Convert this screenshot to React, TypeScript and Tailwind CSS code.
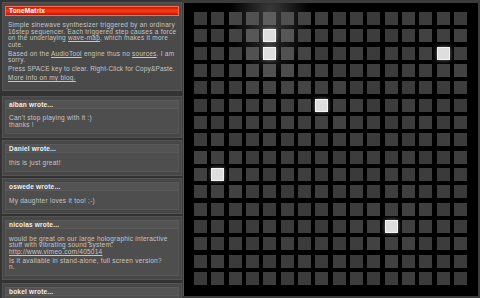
import React from "react";

type Comment = {
  id: string;
  author: string;
  lines: React.ReactNode[];
};

const ACTIVE: [number, number][] = [
  [4, 1],
  [4, 2],
  [14, 2],
  [7, 5],
  [1, 9],
  [11, 12],
];

const COMMENTS: Comment[] = [
  { id: "c1", author: "alban", lines: [<>Can't stop playing with it :)<br />thanks !</>] },
  { id: "c2", author: "Daniel", lines: ["this is just great!"] },
  { id: "c3", author: "oswede", lines: ["My daughter loves it too! ;-)"] },
  {
    id: "c4",
    author: "nicolas",
    lines: [
      <>
        would be great on our large holographic interactive stuff with vibrating sound system:
        <br />
        <span className="underline">http://www.vimeo.com/405014</span>
      </>,
      <>
        Is it available in stand-alone, full screen version?
        <br />
        n.
      </>,
    ],
  },
  { id: "c5", author: "bokel", lines: ["Wow, this is great."] },
];

// wave glow around the top-left active pair, small falloff elsewhere
function cellShade(col: number, row: number) {
  let v = 60 + ((col * 7 + row * 13) % 5) - 2;
  const dx = col - 4;
  v += 26 * Math.exp(-(dx * dx) / 2.4) * Math.exp(-(row * row) / 14);
  for (const [c, r] of ACTIVE) {
    const d = (c - col) ** 2 + (r - row) ** 2;
    v += 7 * Math.exp(-d / 3);
  }
  const n = Math.min(110, Math.round(v));
  return `rgb(${n},${n},${n})`;
}

function Cell({ col, row }: { col: number; row: number }) {
  const on = ACTIVE.some(([c, r]) => c === col && r === row);
  if (on) {
    return <div className="h-[13px] w-[13px] border border-[#f4f4f4] bg-[#dedede] shadow-[0_0_4px_rgba(255,255,255,0.45)]" />;
  }
  return <div className="h-[13px] w-[13px]" style={{ backgroundColor: cellShade(col, row) }} />;
}

function CommentBox({ c }: { c: Comment }) {
  return (
    <div className="border border-[#535353] bg-[#474747] px-[2px] pb-[3px] pt-[3px]">
      <div className="flex h-[9px] items-center border border-[#5a5a5a] bg-[#535353] px-[3px] text-[6.5px] font-bold tracking-[0.2px] text-[#f0f0f0]">
        {c.author} wrote...
      </div>
      <div className="flex flex-col gap-[2.5px] border border-t-0 border-[#575757] bg-[#4e4e4e] pb-[4.5px] pl-[3px] pr-0 pt-[6.5px] text-[6.5px] leading-[6.5px] tracking-[0.25px] text-[#c6c6c6]">
        {c.lines.map((l, i) => (
          <p key={i}>{l}</p>
        ))}
      </div>
    </div>
  );
}

export default function App() {
  const cells = [];
  for (let r = 0; r < 16; r++) {
    for (let c = 0; c < 16; c++) {
      cells.push(<Cell key={`${r}-${c}`} col={c} row={r} />);
    }
  }

  return (
    <div
      className="flex h-[298px] w-[480px] overflow-hidden bg-[#3b3b3b]"
      style={{ fontFamily: '"Liberation Sans", Arial, sans-serif' }}
    >
      <div className="flex w-[182px] shrink-0 flex-col gap-[2.5px] bg-[#333] pl-[2px] pt-[2px]">
        <div className="mb-[2.5px] border border-[#555] bg-[#4a4a4a] px-[2px] pb-[8px] pt-[3px]">
          <div className="flex h-[10px] items-center border border-[#ff6a4a] bg-linear-to-b from-[#c81c08] via-[#ff3a16] to-[#b81806] px-[3px] text-[6.5px] font-bold tracking-[0.2px] text-white">
            ToneMatrix
          </div>
          <div className="flex flex-col gap-[2.5px] pl-[3px] pr-0 pt-[6.45px] text-[6.5px] leading-[6.5px] tracking-[0.25px] text-[#c6c6c6]">
            <p>
              Simple sinewave synthesizer triggered by an ordinary 16step sequencer. Each triggered step causes a force
              <br />
              on the underlaying <span className="underline">wave-map</span>, which makes it more cute.
            </p>
            <p>
              Based on the <span className="underline">AudioTool</span> engine thus no{" "}
              <span className="underline">sources</span>. I am sorry.
            </p>
            <p className="whitespace-nowrap tracking-[0.15px]">Press SPACE key to clear. Right-Click for Copy&amp;Paste.</p>
            <p className="underline">More info on my blog.</p>
          </div>
        </div>
        {COMMENTS.map((c) => (
          <CommentBox key={c.id} c={c} />
        ))}
      </div>

      <div className="ml-[1px] mt-[3px] h-[293px] w-[295px] shrink-0 border-l border-[#555] bg-[radial-gradient(ellipse_40px_70px_at_86px_10px,#3a3a3a,#000)] pl-[10px] pt-[9px]">
        <div className="grid grid-cols-[repeat(16,13px)] gap-x-[4.33px] gap-y-[4.33px]">{cells}</div>
      </div>
    </div>
  );
}
